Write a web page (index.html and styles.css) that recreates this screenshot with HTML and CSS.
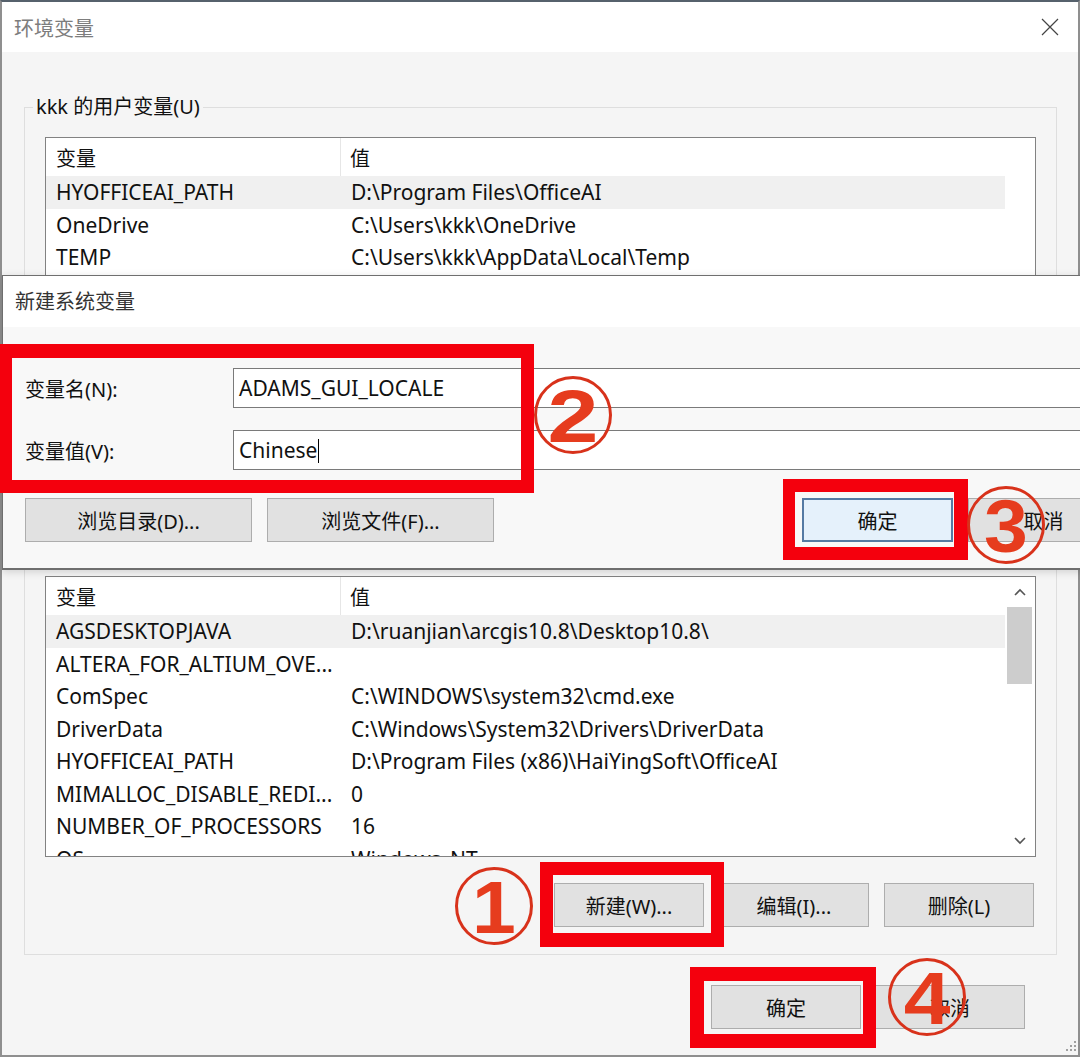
FILE: index.html
```html
<!DOCTYPE html>
<html lang="zh-CN">
<head>
  <meta charset="UTF-8">
  <title>环境变量</title>
  <link rel="stylesheet" href="styles.css">
</head>
<body>
  <div class="stage">
    <div class="window">
      <div class="titlebar">
        <span class="title">环境变量</span>
        <svg class="close" width="18" height="18" viewBox="0 0 18 18"><path d="M1 1L17 17M17 1L1 17"/></svg>
      </div>

      <div class="content">
        <div class="group group-user">
          <div class="group-title">kkk 的用户变量(U)</div>
          <div class="list list-user">
            <div class="list-main">
              <div class="list-head"><div class="cell">变量</div><div class="cell">值</div></div>
              <div class="row selected"><div class="cell">HYOFFICEAI_PATH</div><div class="cell">D:\Program Files\OfficeAI</div></div>
              <div class="row"><div class="cell">OneDrive</div><div class="cell">C:\Users\kkk\OneDrive</div></div>
              <div class="row"><div class="cell">TEMP</div><div class="cell">C:\Users\kkk\AppData\Local\Temp</div></div>
              <div class="row"><div class="cell">TMP</div><div class="cell">C:\Users\kkk\AppData\Local\Temp</div></div>
            </div>
            <div class="scrollbar"></div>
          </div>
          <div class="btn-row">
            <button class="btn">新建(N)...</button>
            <button class="btn">编辑(E)...</button>
            <button class="btn">删除(D)</button>
          </div>
        </div>

        <div class="group group-system">
          <div class="group-title">系统变量(S)</div>
          <div class="list list-system">
            <div class="list-main">
              <div class="list-head"><div class="cell">变量</div><div class="cell">值</div></div>
              <div class="row selected"><div class="cell">AGSDESKTOPJAVA</div><div class="cell">D:\ruanjian\arcgis10.8\Desktop10.8\</div></div>
              <div class="row"><div class="cell">ALTERA_FOR_ALTIUM_OVE...</div><div class="cell"></div></div>
              <div class="row"><div class="cell">ComSpec</div><div class="cell">C:\WINDOWS\system32\cmd.exe</div></div>
              <div class="row"><div class="cell">DriverData</div><div class="cell">C:\Windows\System32\Drivers\DriverData</div></div>
              <div class="row"><div class="cell">HYOFFICEAI_PATH</div><div class="cell">D:\Program Files (x86)\HaiYingSoft\OfficeAI</div></div>
              <div class="row"><div class="cell">MIMALLOC_DISABLE_REDI...</div><div class="cell">0</div></div>
              <div class="row"><div class="cell">NUMBER_OF_PROCESSORS</div><div class="cell">16</div></div>
              <div class="row"><div class="cell">OS</div><div class="cell">Windows_NT</div></div>
            </div>
            <div class="scrollbar">
              <div class="sb-btn"><svg width="12" height="8" viewBox="0 0 12 8"><polyline points="1,7 6,2 11,7"/></svg></div>
              <div class="sb-thumb"></div>
              <div class="sb-track"></div>
              <div class="sb-btn"><svg width="12" height="8" viewBox="0 0 12 8"><polyline points="1,1 6,6 11,1"/></svg></div>
            </div>
          </div>
          <div class="btn-row">
            <button class="btn">新建(W)...</button>
            <button class="btn">编辑(I)...</button>
            <button class="btn">删除(L)</button>
          </div>
        </div>

        <div class="footer-btns">
          <button class="btn">确定</button>
          <button class="btn">取消</button>
        </div>
      </div>
    </div>

    <!-- new system variable dialog, on top of the main window -->
    <div class="dialog">
      <div class="dialog-title">新建系统变量</div>
      <div class="dialog-body">
        <div class="fields">
          <label class="field-label">变量名(N):</label>
          <div class="input">ADAMS_GUI_LOCALE</div>
          <label class="field-label">变量值(V):</label>
          <div class="input">Chinese<span class="caret"></span></div>
        </div>
        <div class="dialog-btns">
          <button class="btn btn-wide">浏览目录(D)...</button>
          <button class="btn btn-wide">浏览文件(F)...</button>
          <button class="btn btn-default">确定</button>
          <button class="btn">取消</button>
        </div>
      </div>
    </div>

    <!-- annotations -->
    <div class="mark mark-fields"></div>
    <div class="mark mark-ok"></div>
    <div class="mark mark-new"></div>
    <div class="mark mark-final"></div>

    <svg class="step step-1" viewBox="0 0 80 80"><circle cx="40" cy="40" r="37.5"/><text transform="translate(40 67) scale(1.05 1)">1</text></svg>
    <svg class="step step-2" viewBox="0 0 80 80"><circle cx="40" cy="40" r="37.5"/><text transform="translate(40 67) scale(1.22 1)">2</text></svg>
    <svg class="step step-3" viewBox="0 0 80 80"><circle cx="40" cy="40" r="37.5"/><text transform="translate(40 67) scale(1.05 1)">3</text></svg>
    <svg class="step step-4" viewBox="0 0 80 80"><circle cx="40" cy="40" r="37.5"/><text transform="translate(40 67) scale(1.12 1)">4</text></svg>

    <svg class="grip" width="14" height="14" viewBox="0 0 14 14">
      <rect x="11" y="1" width="2" height="2"/>
      <rect x="7" y="5" width="2" height="2"/><rect x="11" y="5" width="2" height="2"/>
      <rect x="3" y="9" width="2" height="2"/><rect x="7" y="9" width="2" height="2"/><rect x="11" y="9" width="2" height="2"/>
    </svg>
  </div>
</body>
</html>
```

FILE: styles.css
```css
body {
  margin: 0;
  font-family: "Noto Sans", "Noto Sans CJK SC", sans-serif;
  font-size: 20px;
  color: #111;
  background: #fff;
}

.stage {
  position: relative;
  width: 1080px;
  height: 1057px;
  overflow: hidden;
}

/* Main window */
.window {
  box-sizing: border-box;
  width: 1080px;
  height: 1057px;
  border: 2px solid #8f8f8f;
  border-top-color: #56616c;
  background: #f5f5f5;
}
.titlebar {
  height: 50px;
  background: #fff;
  display: flex;
  align-items: center;
  justify-content: space-between;
  padding: 0 19px 0 12px;
}
.title { color: #7d7d7d; }
.close path { stroke: #444; stroke-width: 1.2; fill: none; }

.content {
  padding: 55px 21px 0 22px;
}

/* Group boxes */
.group {
  border: 1px solid #dedede;
  padding: 0 20px;
}
.group-title {
  width: fit-content;
  margin: -13px 0 0 -12px;
  padding: 0 3px;
  line-height: 24px;
  background: #f5f5f5;
  color: #111;
}
.group-user {
  box-sizing: border-box;
  height: 423px;
  margin-bottom: 16px;
}
.group-system { padding-bottom: 27px; }

/* Lists */
.list {
  display: flex;
  margin-top: 18px;
  border: 1px solid #828282;
  background: #fff;
  overflow: hidden;
}
.list-user { height: 253px; }
.list-system { height: 281px; box-sizing: border-box; }
.list-main { flex: 1; min-width: 0; }
.list-head {
  display: grid;
  grid-template-columns: 295px 1fr;
  height: 38px;
}
.list-head .cell { padding-top: 3px; line-height: 35px; }
.list-head .cell:first-child { border-right: 1px solid #e6e6e6; }
.row {
  display: grid;
  grid-template-columns: 296px 1fr;
  height: 32.5px;
  line-height: 32.5px;
  font-size: 21px;
  white-space: nowrap;
}
.row.selected { background: #f0f0f0; }
.cell { padding-left: 10px; overflow: hidden; color: #111; }
.cell + .cell { padding-left: 9px; }

.scrollbar {
  width: 30px;
  display: flex;
  flex-direction: column;
}
.sb-btn {
  height: 30px;
  display: flex;
  align-items: center;
  justify-content: center;
}
.sb-btn polyline { fill: none; stroke: #555; stroke-width: 1.6; }
.sb-thumb {
  height: 77px;
  margin: 0 3px 0 2px;
  background: #cdcdcd;
}
.sb-track { flex: 1; }

/* Buttons */
.btn {
  box-sizing: border-box;
  width: 150px;
  height: 44px;
  padding: 0;
  border: 1px solid #adadad;
  background: #e1e1e1;
  font: inherit;
  color: #111;
}
.btn-row {
  display: flex;
  justify-content: flex-end;
  gap: 15px;
  margin: 26px 2px 0 0;
}
.footer-btns {
  display: flex;
  justify-content: flex-end;
  gap: 14px;
  margin: 30px 32px 0 0;
}

/* Dialog */
.dialog {
  position: absolute;
  left: 2px;
  top: 275px;
  width: 1145px;
  height: 295px;
  box-sizing: border-box;
  border: 1px solid #6f6f6f;
  border-bottom-width: 2px;
  background: #f8f8f8;
  box-shadow: 0 2px 8px rgba(0,0,0,0.15);
}
.dialog-title {
  height: 51px;
  line-height: 51px;
  padding-left: 12px;
  background: #fff;
  color: #333;
}
.dialog-body {
  padding: 41px 27px 0 22px;
}
.fields {
  display: grid;
  grid-template-columns: 208px 1fr;
  row-gap: 22px;
  align-items: center;
}
.field-label { color: #111; }
.input {
  box-sizing: border-box;
  height: 40px;
  line-height: 38px;
  padding-left: 5px;
  border: 1px solid #7a7a7a;
  background: #fff;
  font-size: 21px;
  color: #111;
}
.caret {
  display: inline-block;
  width: 1px;
  height: 24px;
  margin-left: 1px;
  vertical-align: -5px;
  background: #000;
}
.dialog-btns {
  display: flex;
  gap: 15px;
  margin-top: 28px;
}
.dialog-btns .btn { width: 151px; }
.dialog-btns .btn-wide { width: 227px; }
.dialog-btns .btn-default {
  margin-left: auto;
  background: #e5f1fb;
  border: 2px solid #557aa3;
}

/* Red highlight boxes */
.mark {
  position: absolute;
  box-sizing: border-box;
  border: 13px solid #f4000d;
}
.mark-fields { left: 0; top: 344px; width: 534px; height: 149px; border-width: 14px 13px 13px 12px; }
.mark-ok { left: 783px; top: 479px; width: 185px; height: 81px; border-width: 13px 14px 13px 12px; }
.mark-new { left: 540px; top: 862px; width: 184px; height: 85px; border-width: 13px 13px 14px 13px; }
.mark-final { left: 690px; top: 967px; width: 186px; height: 81px; border-width: 14px 13px 14px 14px; }

/* Circled step numbers */
.step {
  position: absolute;
  width: 80px;
  height: 80px;
}
.step circle { fill: none; stroke: #d8321b; stroke-width: 3; }
.step text {
  font-family: "Liberation Sans", Arial, sans-serif;
  font-weight: 700;
  font-size: 75px;
  fill: #e63c1e;
  text-anchor: middle;
}
.step-1 { left: 454px; top: 866px; }
.step-2 { left: 533px; top: 375px; }
.step-3 { left: 966px; top: 485px; }
.step-4 { left: 887px; top: 957px; }

.grip {
  position: absolute;
  right: 3px;
  bottom: 3px;
  fill: #a0a0a0;
}
```
